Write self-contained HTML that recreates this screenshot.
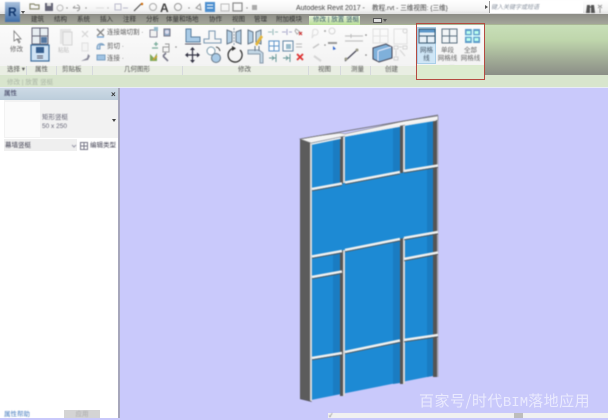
<!DOCTYPE html>
<html><head><meta charset="utf-8"><style>
html,body{margin:0;padding:0}
body{width:608px;height:418px;overflow:hidden;position:relative;background:#c9c9fb;font-family:"Liberation Sans","Noto Sans CJK SC",sans-serif;}
.a{position:absolute;white-space:nowrap}
.t{position:absolute;white-space:nowrap;font-size:6.5px;line-height:8px;color:#555;filter:blur(.4px)}
.c{text-align:center}
</style></head><body>
<!-- title bar -->
<div class="a" style="left:0;top:0;width:608px;height:14px;background:linear-gradient(#fff,#f4f4f4 70%,#e2e2e2)"></div>
<!-- tabs -->
<div class="a" style="left:0;top:14px;width:608px;height:10px;background:linear-gradient(#8d8d86,#a3a59a)"></div>
<div class="a" style="left:0;top:24px;width:608px;height:1px;background:#a9b795"></div>
<!-- ribbon -->
<div class="a" style="left:0;top:25px;width:608px;height:41px;background:linear-gradient(#fbfbfb,#f3f3f3)"></div>
<div class="a" style="left:0;top:66px;width:608px;height:9px;background:#e9eee3"></div>
<div class="a" style="left:0;top:75px;width:608px;height:12px;background:#d8e5cd"></div>
<div class="a" style="left:0;top:87px;width:608px;height:1px;background:#e8ecf6"></div>
<div class="a" style="left:484px;top:25px;width:124px;height:50px;background:linear-gradient(#c8dfb8,#bfd6ac 30%,#a2ad97 68%,#8b8e87)"></div>
<!-- R logo -->
<div class="a" style="left:5px;top:2px;width:15px;height:20px;background:linear-gradient(#a9c0dc,#3f6ea8);filter:blur(.6px)"></div>
<div class="a" style="left:8px;top:5px;font:bold 12px/14px 'Liberation Sans',sans-serif;color:#12386f;filter:blur(.5px)">R</div>
<div class="a" style="left:21px;top:11px;width:0;height:0;border:2px solid transparent;border-top:3px solid #555"></div>
<!-- qat -->
<svg class="a" style="left:26px;top:0;filter:blur(.6px)" width="240" height="14" viewBox="0 0 240 14">
<path d="M4 9V4h4l1 1h4v4z" fill="none" stroke="#8a8a70" stroke-width="1.2"/>
<rect x="19" y="3" width="8" height="8" fill="#667"/><rect x="21" y="3" width="4" height="3" fill="#ddd"/>
<circle cx="34" cy="8" r="3" fill="none" stroke="#bbb"/><circle cx="41" cy="8" r=".7" fill="#888"/>
<path d="M47 8h6M47 8l2-2M51 5c3 0 4 5 0 6" stroke="#999" fill="none"/><circle cx="60" cy="8" r=".7" fill="#888"/>
<path d="M70 8h8" stroke="#ddd"/><circle cx="82" cy="8" r=".7" fill="#bbb"/>
<path d="M89 4h6v6h-6zM97 8h5" stroke="#bbc" fill="none"/>
<path d="M108 11l7-7" stroke="#555" stroke-width="1.2"/><circle cx="116" cy="4" r="1.2" fill="#c60"/>
<circle cx="127" cy="7" r="3.5" fill="none" stroke="#aaa"/>
<text x="134" y="12" font-family="Liberation Sans" font-weight="bold" font-size="12" fill="#444">A</text>
<circle cx="152" cy="7" r="3.5" fill="none" stroke="#999"/><circle cx="163" cy="8" r=".7" fill="#888"/>
<path d="M170 8l4-4 1 6z" fill="none" stroke="#999"/>
<rect x="179" y="2" width="10" height="10" fill="#4d8fcf"/><path d="M181 5h6M181 8h6" stroke="#fff"/>
<rect x="195" y="4" width="8" height="7" fill="none" stroke="#bbb"/>
<rect x="207" y="3" width="9" height="8" fill="none" stroke="#888" stroke-width="1.2"/>
<circle cx="221" cy="8" r=".7" fill="#888"/><rect x="226" y="5" width="5" height="5" fill="#aaa"/>
</svg>
<div class="t" style="left:296px;top:5px;font-size:7px;color:#444">Autodesk Revit 2017 -</div>
<div class="t" style="left:372px;top:5px;font-size:6.6px;color:#444">教程.rvt - 三维视图: {三维}</div>
<div class="a" style="left:489px;top:1px;width:93px;height:12px;background:#fff;border-left:1px solid #999"></div>
<div class="a" style="left:485px;top:5px;width:0;height:0;border:2px solid transparent;border-left:3px solid #555"></div>
<div class="t" style="left:491px;top:4px;font-size:6px;color:#8a93a0;font-style:italic">键入关键字或短语</div>
<svg class="a" style="left:585px;top:3px;filter:blur(.5px)" width="20" height="11" viewBox="0 0 20 11">
<path d="M2 2h3v8H1zM6 2h3l1 8H6zM6 4h0" fill="#555"/><path d="M4 4h3" stroke="#555"/><path d="M13 2l4 3M17 2l-4 3M15 5v5" stroke="#999"/>
</svg>
<!-- tab labels -->
<div class="t" style="left:31px;top:16px;color:#333">建筑</div>
<div class="t" style="left:54px;top:16px;color:#333">结构</div>
<div class="t" style="left:77px;top:16px;color:#333">系统</div>
<div class="t" style="left:100px;top:16px;color:#333">插入</div>
<div class="t" style="left:123px;top:16px;color:#333">注释</div>
<div class="t" style="left:146px;top:16px;color:#333">分析</div>
<div class="t" style="left:166px;top:16px;color:#333">体量和场地</div>
<div class="t" style="left:209px;top:16px;color:#333">协作</div>
<div class="t" style="left:232px;top:16px;color:#333">视图</div>
<div class="t" style="left:254px;top:16px;color:#333">管理</div>
<div class="t" style="left:276px;top:16px;color:#333">附加模块</div>
<div class="a" style="left:309px;top:16px;width:51px;height:9px;background:linear-gradient(#e3efd6,#b9de98)"></div>
<div class="t" style="left:313px;top:16px;color:#356">修改 | 放置 竖梃</div>
<div class="a" style="left:373px;top:18px;width:7px;height:3px;background:#ddd;border:1px solid #555"></div>
<div class="a" style="left:383px;top:19px;width:0;height:0;border:2px solid transparent;border-top:3px solid #555"></div>
<!-- ribbon left -->
<svg class="a" style="left:0;top:24px;filter:blur(.55px)" width="416" height="44" viewBox="0 24 416 44">
<path d="M14 31v10l3-2 2 4 1-1-2-3h3z" fill="#fff" stroke="#777" stroke-width=".8"/>
<rect x="32" y="28" width="16" height="16" fill="#e8eef2" stroke="#667" stroke-width="1"/><path d="M32 36h16M40 28v16" stroke="#667"/><rect x="41" y="37" width="6" height="6" fill="#5577a0"/>
<rect x="31" y="45" width="18" height="16" fill="#cfe3f5" stroke="#3d6d9c" stroke-width="1.2"/><rect x="36" y="47" width="8" height="6" fill="#345d8e"/><path d="M37 56h6M37 58h6" stroke="#556"/>
<rect x="60" y="29" width="11" height="15" fill="#e4e4e4"/><rect x="63" y="32" width="9" height="13" fill="#f0f0f0" stroke="#d4d4d4"/>
<path d="M82 31l6 6M88 31l-6 6" stroke="#d4d4d4" stroke-width="1.2"/>
<rect x="82" y="43" width="6" height="8" fill="#f4f4f4" stroke="#e0e0e0"/>
<path d="M81 61l6-3 1-4 2 2-2 4z" fill="#889"/>
<path d="M97 29l7 7M104 29l-7 7" stroke="#888" stroke-width="1.4"/><path d="M97 37h7" stroke="#69c" stroke-width="1.2"/>
<path d="M97 47a4 4 0 0 1 7-2h-4v4h-3z" fill="#bcd3ea" stroke="#7a9fc2"/>
<path d="M97 60h8v-5h-8z" fill="#a0c3e3" stroke="#7a9fc2"/>
<rect x="150" y="30" width="7" height="7" fill="#f2f2f2" stroke="#889"/><rect x="154" y="27" width="4" height="4" fill="#9bc"/>
<path d="M164 29h6v7h-6z" fill="#8fa9c6" stroke="#778"/><circle cx="167" cy="32" r="2" fill="#dde"/>
<path d="M154 44h4M156 42v4M152 48h6" stroke="#7a9" stroke-width="1.3"/>
<path d="M163 47h6v5h-6zM165 44h4v3" fill="none" stroke="#999"/><circle cx="176" cy="47" r=".8" fill="#888"/>
<path d="M150 61v-7l4 4 3-5v8z" fill="#7fa85a"/><path d="M153 60l4-4" stroke="#d6a030" stroke-width="1.4"/>
<path d="M163 56l5 5M163 56l3-3" stroke="#778" stroke-width="1.6"/>
<!-- modify group -->
<path d="M186 29v13h14v-5h-9v-8z" fill="#a9cbe7" stroke="#5b7f9f"/><path d="M185 44h16" stroke="#556" stroke-width="1"/>
<path d="M204 43v-4h5v-8h6v8h6v4z" fill="#f5f5f5" stroke="#7d9ab3" stroke-width="1.1"/>
<path d="M227 30l5 2v10l-5 2zM241 30l-5 2v10l5 2z" fill="#b3cfe6" stroke="#678"/><path d="M234 28v17" stroke="#89a" stroke-dasharray="2 1"/>
<path d="M248 30l5 2v10l-5 2z" fill="#b3cfe6" stroke="#678"/><path d="M261 30l-5 2v10l5 2z" fill="#c2d6e5" stroke="#678"/><path d="M255 44l6-9 2 2-6 9z" fill="#e4b53a"/>
<path d="M192.500 49v12M186 55h13" stroke="#334" stroke-width="1.2"/><path d="M192.500 47l2.500 3h-5zM192.500 63l2.500-3h-5zM185 55l3-2.500v5zM200 55l-3-2.500v5z" fill="#334"/>
<circle cx="211" cy="51" r="4" fill="#fff" stroke="#7a9aab"/><circle cx="216" cy="58" r="4.500" fill="#a9cbe7" stroke="#678"/><path d="M216 47a5 5 0 0 1 4 4" fill="none" stroke="#444"/>
<path d="M240 50a7 7 0 1 1-5-2" fill="none" stroke="#333" stroke-width="1.3"/><path d="M232 46l4 2.500-4 2.500z" fill="#333"/>
<path d="M248 50h11l4 3v10h-3v-9h-12z" fill="#c2d6e5" stroke="#89a"/><path d="M255 46v5M259 46v5" stroke="#678"/>
<path d="M268 32h4M275 32h3M273 29v6" stroke="#9bb" stroke-width="1.1"/>
<path d="M282 32h4M289 32h3M287 29v6" stroke="#aac" stroke-width="1.1"/>
<path d="M296 29l4 3-3 2-2-3z" fill="none" stroke="#aaa"/><path d="M299 32l3 3M302 32l-3 3" stroke="#c33" stroke-width="1.1"/>
<rect x="269" y="41" width="10" height="10" fill="#fff" stroke="#6297ca" stroke-width="1.1"/><path d="M274 41v10M269 46h10" stroke="#6297ca"/>
<rect x="283" y="41" width="10" height="10" fill="#fff" stroke="#6a8ca8" stroke-width="1.1"/><rect x="286" y="44" width="5" height="5" fill="#9bc"/>
<path d="M296 44h6M296 47h6" stroke="#bbb"/>
<path d="M269 58h7M276 54v8M272 56l2 2-2 2" stroke="#6a9a9a" fill="none"/>
<path d="M283 58h7M290 54v8M286 56l2 2-2 2" stroke="#6a9a9a" fill="none"/>
<path d="M297 54l6 6M303 54l-6 6" stroke="#d33" stroke-width="1.8"/>
<!-- view measure create -->
<path d="M313 30a3 3 0 1 1 1 5l-2 3z" fill="none" stroke="#ddd"/><circle cx="325" cy="31" r="1" fill="#aaa"/><circle cx="332" cy="31" r="3" fill="none" stroke="#d4d4d4"/>
<path d="M313 48l6-4" stroke="#c4c4c4" stroke-width="1.4"/><circle cx="325" cy="45" r=".8" fill="#888"/><path d="M328 42h9v2h-9z" fill="#999"/><path d="M333 46l3 3-3 1z" fill="#36c"/>
<path d="M314 56l7 5" stroke="#d4d4d4" stroke-width="2"/>
<path d="M345 36h18M345 41h18" stroke="#c4c4c4" stroke-width="1.3"/><path d="M351 34v4" stroke="#bbb"/><circle cx="366" cy="35" r=".8" fill="#777"/>
<path d="M345 61l12-11" stroke="#445" stroke-width="1.2"/><circle cx="346" cy="59" r="1.500" fill="#998"/><circle cx="357" cy="50" r="1.500" fill="#998"/><circle cx="366" cy="55" r=".8" fill="#777"/>
<rect x="373" y="29" width="15" height="14" fill="none" stroke="#e0e0e0"/><path d="M380 29v14M373 36h15" stroke="#e0e0e0"/>
<rect x="394" y="29" width="13" height="15" fill="none" stroke="#e0e0e0"/><circle cx="405" cy="31" r="2" fill="none" stroke="#d4d4d4"/>
<path d="M373 48l13-4 6 3v11l-13 4-6-3z" fill="#7fb0da" stroke="#445"/><path d="M378 51l13-4M378 51v10" stroke="#eef"/>
<rect x="394" y="46" width="4" height="3" fill="none" stroke="#d4d4d4"/><rect x="403" y="46" width="4" height="3" fill="none" stroke="#d4d4d4"/><rect x="394" y="57" width="4" height="3" fill="none" stroke="#d4d4d4"/>
<path d="M399 47h3M396 50v6M400 50l5 6" stroke="#d4d4d4"/>
</svg>
<div class="t" style="left:10px;top:46px;color:#666">修改</div>
<div class="t" style="left:58px;top:47px;color:#bbb;font-size:5.5px">粘贴</div>
<div class="t" style="left:107px;top:29px;color:#555">连接端切割 ·</div>
<div class="t" style="left:107px;top:43px;color:#555">剪切 ·</div>
<div class="t" style="left:107px;top:55px;color:#555">连接 ·</div>
<!-- panel labels -->
<div class="t" style="left:7px;top:66px">选择 ▾</div>
<div class="t" style="left:35px;top:66px">属性</div>
<div class="t" style="left:62px;top:66px">剪贴板</div>
<div class="t" style="left:124px;top:66px">几何图形</div>
<div class="t" style="left:238px;top:66px">修改</div>
<div class="t" style="left:318px;top:66px">视图</div>
<div class="t" style="left:351px;top:66px">测量</div>
<div class="t" style="left:385px;top:66px">创建</div>
<div class="t" style="left:442px;top:66px">放置</div>
<div class="a" style="left:26px;top:66px;width:1px;height:9px;background:#d6d9dd"></div>
<div class="a" style="left:56px;top:66px;width:1px;height:9px;background:#d6d9dd"></div>
<div class="a" style="left:92px;top:66px;width:1px;height:9px;background:#d6d9dd"></div>
<div class="a" style="left:182px;top:66px;width:1px;height:9px;background:#d6d9dd"></div>
<div class="a" style="left:308px;top:66px;width:1px;height:9px;background:#d6d9dd"></div>
<div class="a" style="left:340px;top:66px;width:1px;height:9px;background:#d6d9dd"></div>
<div class="a" style="left:370px;top:66px;width:1px;height:9px;background:#d6d9dd"></div>
<div class="t" style="left:7px;top:79px;color:#aab5a5">修改 | 放置 竖梃</div>
<!-- place buttons -->
<div class="a" style="left:417px;top:27px;width:19px;height:37px;background:#cfe6f6;border:1px solid #a9cfe9;box-sizing:border-box"></div>
<div class="a" style="left:417px;top:65px;width:67px;height:15px;background:#dcebcf"></div>
<svg class="a" style="left:416px;top:24px;filter:blur(.5px)" width="68" height="24" viewBox="0 0 68 24">
<rect x="3" y="5" width="16" height="14" fill="#e8f1f8" stroke="#35566f" stroke-width="1"/><path d="M3 12h16M11 12v7" stroke="#35566f"/><path d="M3.500 5.500h15v3h-15z" fill="#5b97c9"/>
<rect x="26" y="5" width="15" height="14" fill="#f2f5f7" stroke="#5b7080"/><path d="M26 12h15M33.500 5v14" stroke="#5b7080"/>
<rect x="49" y="5" width="15" height="14" fill="#5b9ac9"/><path d="M49 12h15M56.500 5v14" stroke="#dff" stroke-width="1.5"/><rect x="50.500" y="7" width="4" height="3" fill="#bfe"/><rect x="58.500" y="7" width="4" height="3" fill="#bfe"/><rect x="50.500" y="14" width="4" height="3" fill="#bfe"/><rect x="58.500" y="14" width="4" height="3" fill="#bfe"/>
</svg>
<div class="t c" style="left:417px;top:47px;width:19px;color:#456">网格<br>线</div>
<div class="t c" style="left:436px;top:47px;width:23px;color:#666">单段<br>网格线</div>
<div class="t c" style="left:459px;top:47px;width:23px;color:#666">全部<br>网格线</div>
<div class="a" style="left:416px;top:23px;width:69px;height:57px;box-sizing:border-box;border:1.5px solid #b54a40;filter:blur(.25px)"></div>
<!-- properties panel -->
<div class="a" style="left:0;top:88px;width:118px;height:330px;background:#fff"></div>
<div class="a" style="left:118px;top:88px;width:2px;height:330px;background:#a6a6bb"></div>
<div class="a" style="left:0;top:88px;width:118px;height:12px;background:linear-gradient(#cddae5,#bccddb)"></div>
<div class="t" style="left:4px;top:90px;color:#335">属性</div>
<div class="a" style="left:111px;top:89px;font:bold 8px/11px 'Liberation Sans',sans-serif;color:#333">×</div>
<div class="a" style="left:4px;top:100px;width:114px;height:38px;background:#f2f2f2"></div>
<div class="a" style="left:5px;top:102px;width:35px;height:35px;background:#fbfbfb"></div>
<div class="t" style="left:42px;top:113px;font-size:6.5px;color:#667;line-height:9px">矩形竖梃<br>50 x 250</div>
<div class="a" style="left:112px;top:119px;width:0;height:0;border:2px solid transparent;border-top:3px solid #444"></div>
<div class="a" style="left:4px;top:139px;width:73px;height:12px;background:#efefef"></div>
<div class="t" style="left:5px;top:142px;color:#445">幕墙竖梃</div>
<svg class="a" style="left:70px;top:141px;filter:blur(.4px)" width="20" height="10" viewBox="0 0 20 10"><path d="M2 4l2 2 2-2" fill="none" stroke="#99a"/><rect x="10.500" y="1.500" width="7" height="7" fill="none" stroke="#778"/><path d="M10.500 5h7M14 1.500v7" stroke="#778"/></svg>
<div class="t" style="left:90px;top:142px;color:#445">编辑类型</div>
<div class="t" style="left:4px;top:411px;color:#4c80c0">属性帮助</div>
<div class="a" style="left:64px;top:410px;width:36px;height:8px;background:#d4d4d4"></div>
<div class="t c" style="left:64px;top:411px;width:36px;color:#aaa">应用</div>
<!-- bottom floating bar -->
<div class="a" style="left:328px;top:413px;width:280px;height:5px;background:#f1f1f1"></div>
<div class="a" style="left:514px;top:413px;width:9px;height:5px;background:#bdbdbd"></div>
<div class="t" style="left:329px;top:412px;font-size:5px;color:#333">✓</div>
<!-- curtain wall -->
<svg class="a" style="left:0;top:0;filter:blur(.45px)" width="608" height="418" viewBox="0 0 608 418">
<polygon points="300,139 311,143 311,401 300,398" fill="#5c5c5c"/>
<polygon points="311,143 437,120 437,375 311,400" fill="#1d8ad4"/>
<!-- shaded strips -->
<polygon points="333,139 340,138 340,394 333,395" fill="#1a7cc2"/>
<polygon points="393,128 400,127 400,383 393,384" fill="#1a7cc2"/>
<polygon points="427,122 433,121 433,376 427,377" fill="#1a7cc2"/>
<!-- middle panel without shading -->
<polygon points="312,188 427,168 427,234 312,256" fill="#1d8ad4"/>
<!-- dark mullions -->
<polygon points="340,136 343,135 343,184 340,184" fill="#555"/>
<polygon points="400,125 403,124 403,173 400,173" fill="#555"/>
<polygon points="340,251 343,250 343,396 340,396" fill="#555"/>
<polygon points="400,239 403,238 403,384 400,384" fill="#555"/>
<polygon points="433,119 437,118 437,377 433,377" fill="#555"/>
<!-- light vertical edges -->
<path d="M311 143V401" stroke="#d8d8d8" stroke-width="2"/>
<path d="M344 135V183M344 250V396" stroke="#d8d8d8" stroke-width="2"/>
<path d="M404 124V172M404 238V384" stroke="#d8d8d8" stroke-width="2"/>
<path d="M437.800 118V377" stroke="#999" stroke-width="1"/>
<!-- top -->
<polygon points="300,139 317,136 340,133 345,134 400,122 405,121 438,116 438,120 405,125 400,126 345,136 340,137 311,143" fill="#f4f4f4" stroke="#777" stroke-width=".6"/>
<path d="M300 139L438 115" stroke="#666" stroke-width=".8"/>
<path d="M312 144L341 138M345 136L400 126M405 125L436 120" stroke="#eee" stroke-width="1.6"/>
<!-- transoms -->
<g stroke-width="2.6" stroke="#eef0f0" fill="none">
<path d="M312 189L342 183.500M345 182.500L400 172M404 171L438 165.500"/>
<path d="M312 256.500L342 251M345 250L400 239M404 238L438 232"/>
<path d="M404 259L438 252.500"/>
<path d="M312 277L342 271.500"/>
<path d="M312 358L342 353M345 352L400 340.500M404 340L438 335"/>
</g>
<g stroke-width=".8" stroke="#555" fill="none">
<path d="M312 190.800L342 185.300M345 184.300L400 173.800M404 172.800L438 167.300"/>
<path d="M312 258.300L342 252.800M345 251.800L400 240.800M404 239.800L438 233.800"/>
<path d="M404 260.800L438 254.300"/>
<path d="M312 278.800L342 273.300"/>
<path d="M312 359.800L342 354.800M345 353.800L400 342.300M404 341.800L438 336.800"/>
</g>
<polygon points="300,398 311,401 312,402 300,399" fill="#444"/>
</svg>
<!-- watermark -->
<div class="a" style="left:419px;top:391px;font:15px/20px 'Noto Sans CJK SC',sans-serif;color:rgba(255,255,255,.62);letter-spacing:.5px;filter:blur(.3px)">百家号/时代<span style="font-family:'Liberation Mono',monospace;font-size:14px;letter-spacing:0">BIM</span>落地应用</div>
</body></html>
